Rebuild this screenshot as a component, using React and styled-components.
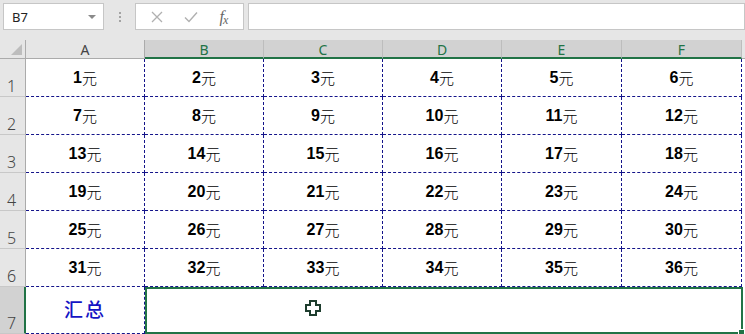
import React from "react";
import styled, { createGlobalStyle } from "styled-components";

const GlobalStyle = createGlobalStyle`
  html, body {
    margin: 0;
    padding: 0;
    background: #ffffff;
    font-family: "Liberation Sans", Arial, sans-serif;
    overflow: hidden;
  }
`;

const GREEN = "#217346";
const DASH = "1px dashed #14148a";

const Page = styled.div`
  width: 745px;
  height: 334px;
  overflow: hidden;
  background: #fff;
`;

const Toolbar = styled.div`
  height: 40px;
  box-sizing: border-box;
  padding: 3px 0 0 3px;
  background: #e6e6e6;
  display: flex;
  align-items: flex-start;
`;

const Box = styled.div`
  height: 27px;
  box-sizing: border-box;
  background: #fff;
  border: 1px solid #c6c6c6;
  display: flex;
  align-items: center;
`;

const NameBox = styled(Box)`
  width: 101px;
  padding: 0 0 0 8px;
  justify-content: space-between;
  font-family: "Noto Sans", sans-serif;
  font-size: 13px;
  color: #222;
`;

const Caret = styled.span`
  width: 0;
  height: 0;
  margin-right: 7px;
  border-left: 4px solid transparent;
  border-right: 4px solid transparent;
  border-top: 4px solid #8a8a8a;
`;

const Dots = styled.div`
  width: 31px;
  height: 27px;
  display: flex;
  flex-direction: column;
  align-items: center;
  justify-content: center;
  gap: 2px;
  span {
    width: 2px;
    height: 2px;
    background: #a3a3a3;
  }
`;

const FxBox = styled(Box)`
  width: 109px;
  justify-content: space-around;
  padding: 0 4px;
  color: #a6a6a6;
`;

const Fx = styled.span`
  font-family: "Liberation Serif", serif;
  font-style: italic;
  font-size: 16px;
  color: #666;
  i {
    font-size: 12px;
    position: relative;
    top: 2px;
    margin-left: -1px;
  }
`;

const Formula = styled(Box)`
  flex: 1;
  margin-left: 4px;
`;

const Sheet = styled.div`
  display: grid;
  grid-template-columns: 26px repeat(4, 119px) repeat(2, 120px) 1fr;
  grid-template-rows: 19px repeat(6, 38px) 47px;
  background: #fff;
`;

const Corner = styled.div`
  position: relative;
  background: #e6e6e6;
  border-right: 1px solid #ababab;
  border-bottom: 1px solid #ababab;
  &::after {
    content: "";
    position: absolute;
    right: 3px;
    bottom: 3px;
    border-left: 11px solid transparent;
    border-bottom: 11px solid #bdbdbd;
  }
`;

const ColHead = styled.div`
  box-sizing: border-box;
  display: flex;
  align-items: center;
  justify-content: center;
  font-family: "Noto Sans", sans-serif;
  font-size: 14px;
  background: ${(p) => (p.$sel ? "#d2d2d2" : "#e6e6e6")};
  color: ${(p) => (p.$sel ? GREEN : "#444")};
  border-right: 1px solid ${(p) => (p.$sel ? "#bdbdbd" : "#ababab")};
  border-bottom: ${(p) => (p.$sel ? `2px solid ${GREEN}` : "1px solid #ababab")};
  padding-top: 1px;
`;

const HeadFill = styled.div`
  background: #e6e6e6;
  border-bottom: 1px solid #ababab;
`;

const RowHead = styled.div`
  box-sizing: border-box;
  display: flex;
  align-items: flex-end;
  padding: 0 0 0 7px;
  font-family: "Noto Sans", sans-serif;
  font-size: 16px;
  font-weight: 300;
  line-height: 20px;
  color: #444;
  background: ${(p) => (p.$sel ? "#d2d2d2" : "#e6e6e6")};
  border-right: ${(p) => (p.$sel ? `2px solid ${GREEN}` : "1px solid #ababab")};
  border-bottom: 1px solid #c8c8c8;
`;

const Cell = styled.div`
  box-sizing: border-box;
  display: flex;
  align-items: center;
  justify-content: center;
  border-right: ${DASH};
  border-bottom: ${DASH};
  font-size: 16px;
  color: #000;
  b {
    font-family: "Liberation Sans", Arial, sans-serif;
    font-weight: bold;
  }
  span {
    font-family: "Noto Sans CJK SC", sans-serif;
    font-size: 15px;
    font-weight: 300;
  }
`;

const Blank = styled.div``;

const Total = styled(Cell)`
  font-family: "Noto Sans CJK SC", sans-serif;
  font-size: 19px;
  font-weight: 500;
  color: #1414c4;
  letter-spacing: 2px;
  padding-bottom: 3px;
`;

const Merged = styled.div`
  grid-column: span 5;
  position: relative;
  box-sizing: border-box;
  border: 2px solid ${GREEN};
  margin-right: -1px;
`;

const Handle = styled.div`
  position: absolute;
  right: -4px;
  bottom: -4px;
  width: 5px;
  height: 5px;
  background: ${GREEN};
  border: 1px solid #fff;
`;

const Cursor = styled.svg`
  position: absolute;
  left: 158px;
  top: 11px;
`;

const values = Array.from({ length: 36 }, (_, i) => i + 1);

export default function App() {
  const cols = ["A", "B", "C", "D", "E", "F"];
  return (
    <Page>
      <GlobalStyle />
      <Toolbar>
        <NameBox>
          B7
          <Caret />
        </NameBox>
        <Dots>
          <span />
          <span />
          <span />
        </Dots>
        <FxBox>
          <svg width="12" height="12" viewBox="0 0 12 12">
            <path d="M1 1L11 11M11 1L1 11" stroke="#b0b0b0" strokeWidth="1.3" />
          </svg>
          <svg width="14" height="12" viewBox="0 0 14 12">
            <path d="M1 6.5L5 10.5L13 1.5" stroke="#b0b0b0" strokeWidth="1.4" fill="none" />
          </svg>
          <Fx>
            f<i>x</i>
          </Fx>
        </FxBox>
        <Formula />
      </Toolbar>
      <Sheet>
        <Corner />
        {cols.map((c, i) => (
          <ColHead key={c} $sel={i > 0}>
            {c}
          </ColHead>
        ))}
        <HeadFill />
        {[0, 1, 2, 3, 4, 5].map((r) => (
          <React.Fragment key={r}>
            <RowHead>{r + 1}</RowHead>
            {values.slice(r * 6, r * 6 + 6).map((v) => (
              <Cell key={v}>
                <b>{v}</b>
                <span>元</span>
              </Cell>
            ))}
            <Blank />
          </React.Fragment>
        ))}
        <RowHead $sel>7</RowHead>
        <Total>汇总</Total>
        <Merged>
          <Cursor width="16" height="16" viewBox="0 0 16 16">
            <path
              d="M5 1H11V5H15V11H11V15H5V11H1V5H5Z"
              fill="#fff"
              stroke="#1e3d2e"
              strokeWidth="2"
            />
          </Cursor>
          <Handle />
        </Merged>
        <Blank />
      </Sheet>
    </Page>
  );
}
